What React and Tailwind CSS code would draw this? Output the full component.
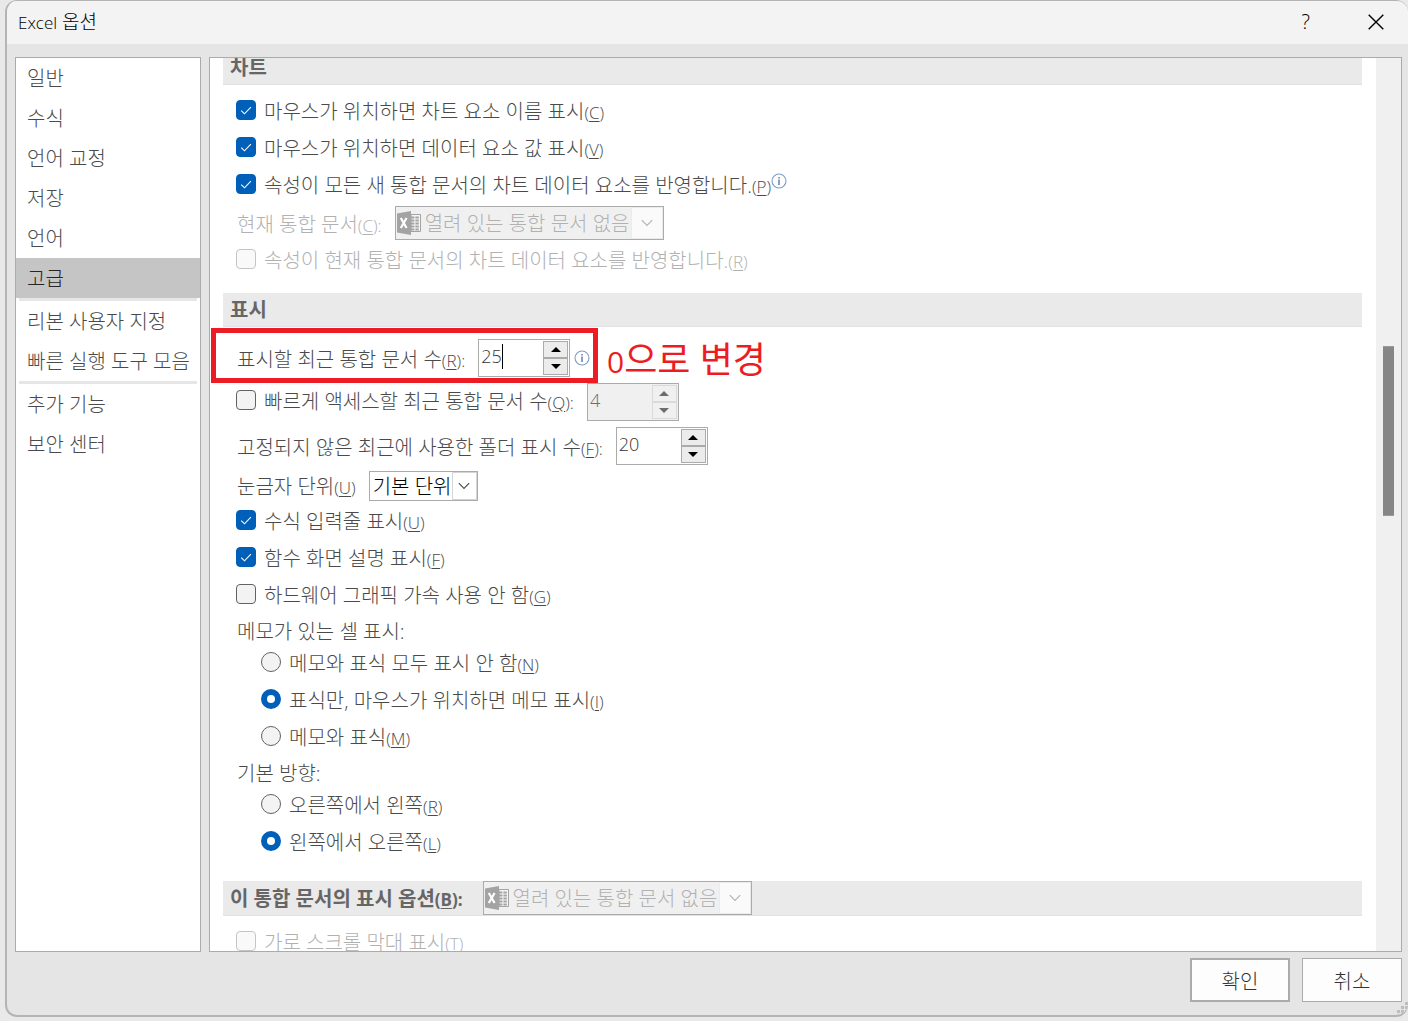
import { useState } from 'react'
import clsx from 'clsx'

const MENU = [
  ['일반', '수식', '언어 교정', '저장', '언어', '고급'],
  ['리본 사용자 지정', '빠른 실행 도구 모음'],
  ['추가 기능', '보안 센터'],
]

// access key hint, e.g. (C)
function Key({ k, colon }) {
  return (
    <span className="text-[17px] leading-6">
      (<span className="underline underline-offset-2">{k}</span>){colon && ':'}
    </span>
  )
}

function InfoIcon({ className }) {
  return (
    <svg viewBox="0 0 16 16" className={clsx('h-4 w-4 shrink-0', className)} fill="none">
      <circle cx="8" cy="8" r="7" stroke="#7c9cc9" strokeWidth="1.1" />
      <path d="M8 6.6V12" stroke="#4a6c9b" strokeWidth="1.3" />
      <path d="M8 4v1.4" stroke="#4a6c9b" strokeWidth="1.3" />
    </svg>
  )
}

function ExcelIcon() {
  return (
    <svg viewBox="0 0 24 24" className="h-6 w-6 shrink-0" fill="none">
      <path d="M14 3.5h9.5v17H14z" fill="#f6f6f6" stroke="#a3a3a3" />
      <path d="M14 6.5h8M14 9.5h8M14 12.5h8M14 15.5h8M14 18.5h8" stroke="#a3a3a3" strokeWidth="1.8" strokeDasharray="3.4 1" />
      <path d="M0 2.5 14 0v24L0 21.5z" fill="#a3a3a3" />
      <path d="M3.8 7 9.6 17M9.6 7 3.8 17" stroke="#fff" strokeWidth="2.2" />
    </svg>
  )
}

function Check({ children, accessKey, colon, defaultChecked, disabled, after }) {
  return (
    <div className="flex h-[37px] items-center pl-[13px]">
      <label className={clsx('flex items-start gap-2 pt-1', disabled && 'text-[#b1b1b1]')}>
        <span className="grid h-5 w-5 shrink-0">
          <input
            type="checkbox"
            defaultChecked={defaultChecked}
            disabled={disabled}
            className="peer col-start-1 row-start-1 h-5 w-5 appearance-none rounded border border-[#626262] bg-[#f3f3f3] checked:border-[#005fb8] checked:bg-[#005fb8] disabled:border-[#c4c4c4] disabled:bg-[#f9f9f9]"
          />
          <svg viewBox="0 0 20 20" className="pointer-events-none invisible col-start-1 row-start-1 peer-checked:visible" fill="none">
            <path d="m5.2 10.6 3.3 3.2 6.4-6.6" stroke="#fff" strokeWidth="1.1" />
          </svg>
        </span>
        <span className="whitespace-nowrap">
          {children}
          <Key k={accessKey} colon={colon} />
        </span>
      </label>
      {after}
    </div>
  )
}

function Radio({ name, children, accessKey, defaultChecked }) {
  return (
    <div className="flex h-[37px] items-center pl-[38px]">
      <label className="flex items-start gap-2 pt-1">
        <input
          type="radio"
          name={name}
          defaultChecked={defaultChecked}
          className="h-5 w-5 shrink-0 appearance-none rounded-full border border-[#626262] bg-[#f3f3f3] checked:border-[6px] checked:border-[#005fb8] checked:bg-white"
        />
        <span className="whitespace-nowrap">
          {children}
          <Key k={accessKey} />
        </span>
      </label>
    </div>
  )
}

function Chevron() {
  return (
    <svg viewBox="0 0 12 8" className="h-2 w-3" fill="none" stroke="currentColor" strokeWidth="1.1">
      <path d="m.8 1.2 5.2 5.2 5.2-5.2" />
    </svg>
  )
}

function WorkbookSelect({ id }) {
  return (
    <div className="flex h-[34px] w-[269px] items-center border border-[#ababab] bg-[#f0f0f0] pl-px text-[#b1b1b1]">
      <ExcelIcon />
      <select id={id} disabled className="ml-1 min-w-0 flex-1 appearance-none bg-transparent pt-0.5 opacity-100">
        <option>열려 있는 통합 문서 없음</option>
      </select>
      <span className="pointer-events-none flex h-full w-8 items-center justify-center border border-[#ebebeb] bg-[#fafafa]">
        <Chevron />
      </span>
    </div>
  )
}

function StepButton({ down, disabled }) {
  return (
    <button
      type="button"
      disabled={disabled}
      aria-label={down ? '감소' : '증가'}
      className={clsx(
        'flex flex-1 items-center justify-center border',
        disabled ? 'border-[#dadada] text-[#6d6d6d]' : 'border-[#ababab] bg-[#ececec] text-black'
      )}
    >
      <svg viewBox="0 0 10 5" className="h-[5px] w-[10px]" fill="currentColor">
        <path d={down ? 'M0 0h10L5 5z' : 'M0 5h10L5 0z'} />
      </svg>
    </button>
  )
}

function Spinner({ id, value, disabled, caret }) {
  const [text, setText] = useState(value)
  return (
    <div
      className={clsx(
        'flex h-[38px] w-[92px] border border-[#ababab] p-px',
        disabled ? 'bg-[#f0f0f0] text-[#6d6d6d]' : 'bg-white text-[#333]'
      )}
    >
      <div className="flex min-w-0 flex-1 items-center pb-1 pl-px">
        <input
          id={id}
          value={text}
          disabled={disabled}
          onChange={(e) => setText(e.target.value)}
          className={clsx('min-w-0 bg-transparent text-lg leading-6 outline-none', caret ? 'w-[21px]' : 'w-full')}
        />
        {caret && <span className="h-[25px] w-px bg-black" />}
      </div>
      <div className="flex w-[25px] flex-col">
        <StepButton disabled={disabled} />
        <StepButton down disabled={disabled} />
      </div>
    </div>
  )
}

function SectionTitle({ children }) {
  return (
    <div className="flex min-h-[34px] items-center gap-5 border-b border-[#e1e1e3] bg-[#eaeaea] pl-[7px] font-bold text-[#666]">
      {children}
    </div>
  )
}

export default function App() {
  const [active, setActive] = useState('고급')

  return (
    <div className="flex h-screen flex-col bg-[#e9e9e9] pb-1 pl-[5px] font-['Open_Sans','Noto_Sans_CJK_KR',sans-serif] text-[20px] leading-6 font-light text-[#4a4a4a]">
      <div className="flex min-h-0 flex-1 flex-col overflow-hidden rounded-xl border-2 border-t border-r-0 border-[#b4b4b4] bg-[#e5e5e5]">
        <header className="flex h-[43px] shrink-0 items-center justify-between bg-[#f3f3f3] pr-6 pb-0.5 pl-[11px] text-black">
          <h1 className="pt-0.5 text-[19px]">
            <span className="text-[17px]">Excel</span> 옵션
          </h1>
          <div className="flex items-center gap-[58px]">
            <button type="button" aria-label="도움말">
              ?
            </button>
            <button type="button" aria-label="닫기">
              <svg viewBox="0 0 16 16" className="h-4 w-4" fill="none" stroke="currentColor" strokeWidth="1.4">
                <path d="m.7.7 14.6 14.6M15.3.7.7 15.3" />
              </svg>
            </button>
          </div>
        </header>

        <div className="flex min-h-0 flex-1 gap-2 pt-[13px] pr-[6px] pl-2">
          <nav className="w-[186px] shrink-0 border border-[#ababab] bg-white">
            {MENU.map((group, i) => (
              <div key={i}>
                {i > 0 && <div className="mx-[3px] h-[3px] bg-[#e6e6e6]" />}
                {group.map((item) => (
                  <button
                    key={item}
                    type="button"
                    onClick={() => setActive(item)}
                    className={clsx(
                      'flex h-10 w-full items-center pt-px pl-[11px] whitespace-nowrap',
                      item === active && 'bg-[#c5c5c5] text-[#262626]'
                    )}
                  >
                    {item}
                  </button>
                ))}
              </div>
            ))}
          </nav>

          <main className="flex min-w-0 flex-1 overflow-hidden border border-[#ababab] bg-white">
            <div className="-mt-[7px] min-w-0 flex-1 pr-[14px] pl-[13px]">
              <SectionTitle>차트</SectionTitle>
              <div className="pt-[7px] pb-[15px]">
                <Check accessKey="C" defaultChecked>마우스가 위치하면 차트 요소 이름 표시</Check>
                <Check accessKey="V" defaultChecked>마우스가 위치하면 데이터 요소 값 표시</Check>
                <Check accessKey="P" defaultChecked after={<InfoIcon className="mb-2" />}>
                  속성이 모든 새 통합 문서의 차트 데이터 요소를 반영합니다.
                </Check>
                <div className="flex h-[38px] items-center gap-[13px] pt-0.5 pl-[14px] text-[#b1b1b1]">
                  <label htmlFor="chart-book" className="pt-1">
                    현재 통합 문서
                    <Key k="C" colon />
                  </label>
                  <WorkbookSelect id="chart-book" />
                </div>
                <Check accessKey="R" disabled>속성이 현재 통합 문서의 차트 데이터 요소를 반영합니다.</Check>
              </div>

              <SectionTitle>표시</SectionTitle>
              <div className="pt-[9px] pb-[21px]">
                <div className="relative flex h-11 items-center gap-[13px] pl-[14px]">
                  <label htmlFor="recent-books" className="pt-1">
                    표시할 최근 통합 문서 수
                    <Key k="R" colon />
                  </label>
                  <div className="flex items-center gap-1">
                    <Spinner id="recent-books" value="25" caret />
                    <InfoIcon />
                  </div>
                  {/* callout */}
                  <div className="pointer-events-none absolute -top-2 -left-3 h-[55px] w-[387px] border-[5px] border-[#ed1c24]" />
                  <p className="absolute top-0.5 left-96 text-4xl leading-11 font-normal whitespace-nowrap text-[#ed1c24]">
                    <span className="text-3xl">0</span>으로 변경
                  </p>
                </div>
                <div className="flex h-11 items-center gap-[13px]">
                  <div className="pb-1">
                    <Check accessKey="Q" colon>빠르게 액세스할 최근 통합 문서 수</Check>
                  </div>
                  <Spinner id="quick-books" value="4" disabled />
                </div>
                <div className="flex h-11 items-center gap-[13px] pl-[14px]">
                  <label htmlFor="recent-folders" className="pt-1">
                    고정되지 않은 최근에 사용한 폴더 표시 수
                    <Key k="F" colon />
                  </label>
                  <Spinner id="recent-folders" value="20" />
                </div>
                <div className="flex h-[34px] items-center gap-[13px] pt-0.5 pl-[14px]">
                  <label htmlFor="ruler" className="pt-0.5">
                    눈금자 단위
                    <Key k="U" />
                  </label>
                  <div className="flex h-[30px] w-[109px] items-center border border-[#ababab] bg-white">
                    <select id="ruler" className="min-w-0 flex-1 appearance-none bg-transparent pt-0.5 pl-[3px] text-black outline-none">
                      <option>기본 단위</option>
                    </select>
                    <span className="pointer-events-none flex h-full w-[25px] items-center justify-center border border-[#d4d4d4]">
                      <Chevron />
                    </span>
                  </div>
                </div>
                <Check accessKey="U" defaultChecked>수식 입력줄 표시</Check>
                <Check accessKey="F" defaultChecked>함수 화면 설명 표시</Check>
                <Check accessKey="G">하드웨어 그래픽 가속 사용 안 함</Check>
                <fieldset>
                  <legend className="flex h-[31px] items-end pl-[14px]">메모가 있는 셀 표시:</legend>
                  <Radio name="memo" accessKey="N">메모와 표식 모두 표시 안 함</Radio>
                  <Radio name="memo" accessKey="I" defaultChecked>표식만, 마우스가 위치하면 메모 표시</Radio>
                  <Radio name="memo" accessKey="M">메모와 표식</Radio>
                </fieldset>
                <fieldset>
                  <legend className="flex h-[31px] items-end pl-[14px]">기본 방향:</legend>
                  <Radio name="direction" accessKey="R">오른쪽에서 왼쪽</Radio>
                  <Radio name="direction" accessKey="L" defaultChecked>왼쪽에서 오른쪽</Radio>
                </fieldset>
              </div>

              <SectionTitle>
                <label htmlFor="display-book" className="pt-0.5">
                  이 통합 문서의 표시 옵션
                  <Key k="B" colon />
                </label>
                <div className="font-light">
                  <WorkbookSelect id="display-book" />
                </div>
              </SectionTitle>
              <div className="pt-[7px]">
                <Check accessKey="T" disabled>가로 스크롤 막대 표시</Check>
              </div>
            </div>

            {/* scrollbar */}
            <div className="w-[25px] shrink-0 bg-[#f0f0f0] pt-[288px] pl-[7px]">
              <div className="h-[170px] w-[11px] border-y border-[#9a9a9a] bg-[#868686]" />
            </div>
          </main>
        </div>

        <footer className="relative flex shrink-0 justify-end gap-3 pt-[6px] pr-[6px] pb-[13px] text-[#333]">
          <button type="button" className="h-11 w-[100px] border-2 border-[#ababab] bg-[#fdfdfd] pt-1">
            확인
          </button>
          <button type="button" className="h-11 w-[100px] border border-[#ababab] bg-[#fdfdfd] pt-1">
            취소
          </button>
          <svg viewBox="0 0 11 11" className="absolute right-0 bottom-[2px] h-[11px] w-[11px]" fill="#bdbdbd">
            <path d="M8 0h3v3H8zM4 4h3v3H4zM8 4h3v3H8zM0 8h3v3H0zM4 8h3v3H4zM8 8h3v3H8z" />
          </svg>
        </footer>
      </div>
    </div>
  )
}
